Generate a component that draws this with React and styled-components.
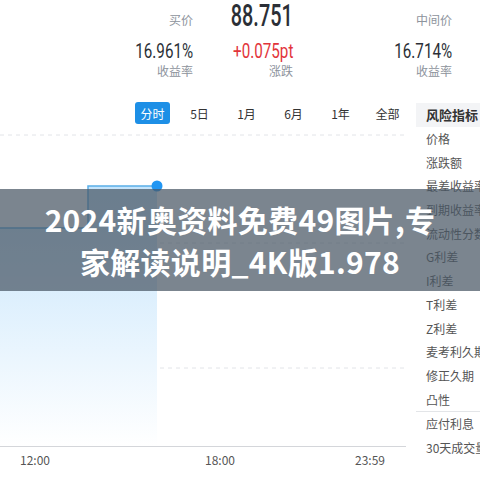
import React from 'react'
import styled, { createGlobalStyle } from 'styled-components'

const Global = createGlobalStyle`
  body {
    margin: 0;
    background: #fff;
    font-family: "Noto Sans CJK SC", "Noto Sans", sans-serif;
  }
`

const Page = styled.div`
  position: relative;
  width: 480px;
  height: 480px;
  overflow: hidden;
`

const Stats = styled.div`
  display: grid;
  grid-template-columns: 193px 100px 159px;
  height: 80px;
`

const StatCol = styled.div`
  display: flex;
  flex-direction: column;
  align-items: flex-end;
`

const TopCell = styled.div`
  height: 39px;
  display: flex;
  align-items: center;
  justify-content: flex-end;
`

const Label = styled.div`
  font-size: 12px;
  line-height: 16px;
  color: #8d939c;
`

const Num = styled.div`
  font-family: Roboto, "Liberation Sans", sans-serif;
  font-size: ${p => (p.$big ? '31px' : '20px')};
  line-height: ${p => (p.$big ? '32px' : '24px')};
  margin-top: ${p => (p.$big ? '-7px' : '0')};
  font-weight: ${p => (p.$big ? 500 : 400)};
  color: ${p => p.$color || '#2b2f36'};
  transform: scaleX(${p => (p.$big ? 0.64 : 0.76)});
  transform-origin: right center;
  white-space: nowrap;
`

const Main = styled.div`
  display: flex;
  margin-top: 22px;
`

const ChartCol = styled.div`
  width: 416px;
  flex-shrink: 0;
`

const Tabs = styled.div`
  display: flex;
  justify-content: flex-end;
  gap: 12px;
  padding-right: 11px;
  height: 22px;
`

const Tab = styled.div`
  width: 35px;
  height: 22px;
  display: flex;
  align-items: center;
  justify-content: center;
  font-size: 12px;
  border-radius: 3px;
  color: ${p => (p.$active ? '#fff' : '#333')};
  background: ${p => (p.$active ? '#1d8fe6' : 'transparent')};
`

const ChartBox = styled.div`
  width: 406px;
  height: 322px;
  border-bottom: 1px solid #d4d6da;
`

const AxisLabels = styled.div`
  display: grid;
  grid-template-columns: 185px 150px 1fr;
  padding-left: 20px;
  padding-top: 4px;
  font-size: 12px;
  color: #555;
`

const Side = styled.div`
  width: 64px;
  overflow: hidden;
  white-space: nowrap;
  padding-top: 1px;
`

const SideHead = styled.div`
  height: 24px;
  line-height: 24px;
  padding-left: 10px;
  background: #f3f4f6;
  font-size: 13px;
  font-weight: 700;
  color: #333;
`

const SideItem = styled.div`
  height: 23.7px;
  line-height: 23.7px;
  padding-left: 10px;
  font-size: 12px;
  color: #555;
  border-top: ${p => (p.$sep ? '1px solid #e3e5e8' : 'none')};
`

const Banner = styled.div`
  position: absolute;
  left: 0;
  right: 0;
  top: 189px;
  height: 102px;
  background: rgba(72, 86, 100, 0.72);
  display: flex;
  flex-direction: column;
  align-items: center;
  justify-content: center;
  color: #fff;
  font-weight: 700;
  font-size: 30px;
  line-height: 42px;
  letter-spacing: 0.3px;
`

const tabs = ['分时', '5日', '1月', '6月', '1年', '全部']
const items = ['价格', '涨跌额', '最差收益率', '到期收益率', '流动性分数', 'G利差', 'I利差', 'T利差', 'Z利差', '麦考利久期', '修正久期', '凸性']

function Chart() {
  return (
    <svg width="406" height="322" viewBox="0 0 406 322">
      <defs>
        <linearGradient id="fill" x1="0" y1="0" x2="0" y2="1">
          <stop offset="0" stopColor="#c4e4fc" />
          <stop offset="1" stopColor="#ffffff" />
        </linearGradient>
      </defs>
      {[11, 119, 244].map(y => (
        <line key={y} x1="0" x2="406" y1={y} y2={y} stroke="#e2e4e8" strokeDasharray="4 4" />
      ))}
      <path d="M0,104 L88,104 L88,62 L157,62 L157,322 L0,322 Z" fill="url(#fill)" />
      <polyline points="0,104 88,104 88,62 157,62" fill="none" stroke="#5aaee8" strokeWidth="1.5" />
      <circle cx="157" cy="62" r="5.5" fill="#2196f3" />
    </svg>
  )
}

export default function App() {
  return (
    <Page>
      <Global />
      <Stats>
        <StatCol>
          <TopCell><Label>买价</Label></TopCell>
          <Num>16.961%</Num>
          <Label>收益率</Label>
        </StatCol>
        <StatCol>
          <TopCell><Num $big>88.751</Num></TopCell>
          <Num $color="#e2343a">+0.075pt</Num>
          <Label>涨跌</Label>
        </StatCol>
        <StatCol>
          <TopCell><Label>中间价</Label></TopCell>
          <Num>16.714%</Num>
          <Label>收益率</Label>
        </StatCol>
      </Stats>
      <Main>
        <ChartCol>
          <Tabs>
            {tabs.map((t, i) => (
              <Tab key={t} $active={i === 0}>{t}</Tab>
            ))}
          </Tabs>
          <ChartBox>
            <Chart />
          </ChartBox>
          <AxisLabels>
            <span>12:00</span>
            <span>18:00</span>
            <span>23:59</span>
          </AxisLabels>
        </ChartCol>
        <Side>
          <SideHead>风险指标</SideHead>
          {items.map(t => (
            <SideItem key={t}>{t}</SideItem>
          ))}
          <SideItem $sep>应付利息</SideItem>
          <SideItem>30天成交量</SideItem>
        </Side>
      </Main>
      <Banner>
        <span>2024新奥资料免费49图片,专</span>
        <span>家解读说明_4K版1.978</span>
      </Banner>
    </Page>
  )
}
